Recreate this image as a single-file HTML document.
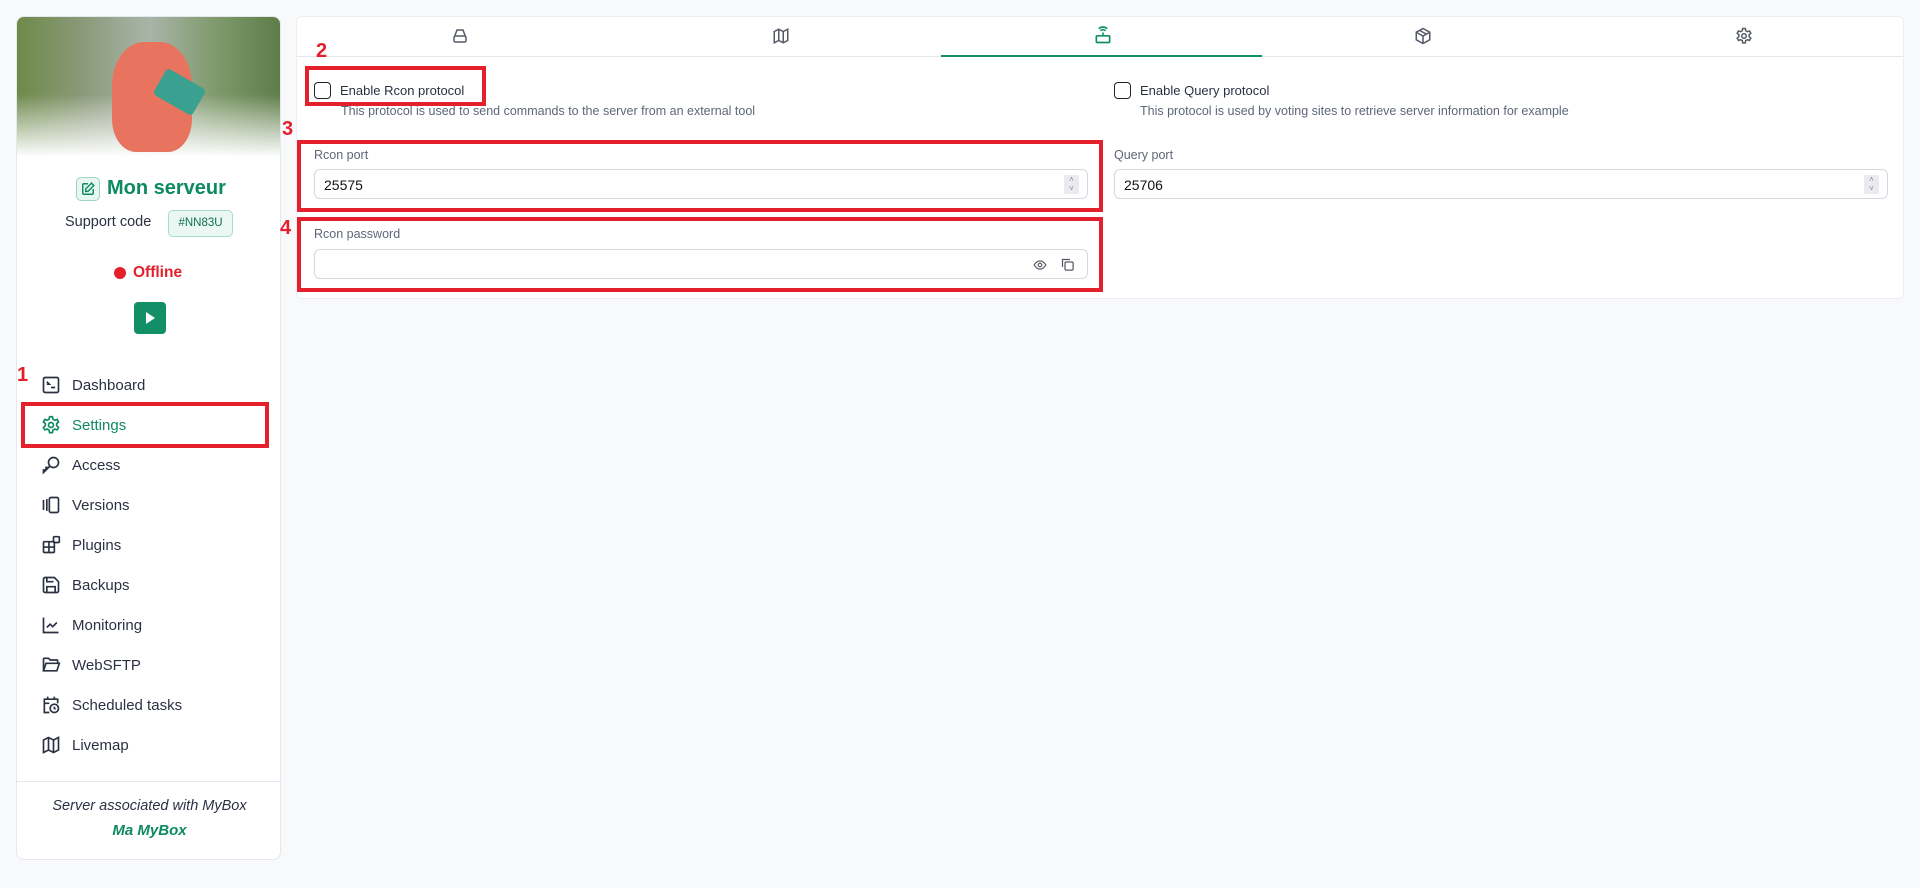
<!DOCTYPE html>
<html><head><meta charset="utf-8"><style>
*{box-sizing:border-box;margin:0;padding:0}
body{width:1920px;height:888px;background:#f8f9fb;font-family:"Liberation Sans",sans-serif;color:#2a3142;position:relative;overflow:hidden}
.a{position:absolute}
.card{left:16px;top:16px;width:265px;height:844px;background:#fff;border:1px solid #e4e7eb;border-radius:8px;overflow:hidden}
.hero{left:0;top:0;width:265px;height:140px;background:linear-gradient(180deg,rgba(255,255,255,0) 55%,#fff 100%),linear-gradient(90deg,#6d8a4a,#8b9a7a 25%,#a9b4a8 50%,#7f9a6c 75%,#5d7c48)}
.nav{left:24px;font-size:15px;color:#2a3142}
.nav svg{position:absolute;left:0;top:-2px}
.nav span{position:absolute;left:31px;top:0;white-space:nowrap}
.red{border:4px solid #e3202b}
.num{color:#e3202b;font-weight:bold;font-size:20px}
.panel{left:296px;top:16px;width:1608px;height:283px;background:#fff;border:1px solid #eceef1;border-radius:6px}
.lbl{font-size:13px;color:#2a3142}
.desc{font-size:12.5px;color:#5e6678}
.inp{height:30px;border:1px solid #d4d8de;border-radius:6px;background:#fff;font-size:14px;color:#111;padding:7px 9px}
.spin{position:absolute;right:8px;top:5px;width:15px;height:19px;background:#e9ebee;border-radius:2px;font-size:8px;color:#888;text-align:center;line-height:9px}
.cb{width:17px;height:17px;border:1.5px solid #222;border-radius:4px;background:#fff}
</style></head><body>

<div class="a card">
  <div class="a hero"></div>
  <div class="a" style="left:95px;top:25px;width:80px;height:110px;background:#e8735f;border-radius:40% 40% 30% 30%"></div>
  <div class="a" style="left:140px;top:60px;width:45px;height:30px;background:#3aa08f;transform:rotate(30deg);border-radius:4px"></div>
  <div class="a" style="left:59px;top:160px;width:24px;height:24px;border:1px solid #9fd6c1;background:#e7f6f0;border-radius:5px"></div>
  <svg class="a" style="left:64px;top:165px" width="14" height="14" viewBox="0 0 24 24" fill="none" stroke="#0e8a63" stroke-width="2.5"><path d="M12 3H5a2 2 0 0 0-2 2v14a2 2 0 0 0 2 2h14a2 2 0 0 0 2-2v-7"/><path d="M18 2l4 4-10 10H8v-4z"/></svg>
  <div class="a" style="left:90px;top:160px;font-size:20px;font-weight:bold;color:#0e8a63">Mon serveur</div>
  <div class="a" style="left:48px;top:197px;font-size:14.5px">Support code</div>
  <div class="a" style="left:151px;top:193px;width:65px;height:27px;border:1px solid #a6dcc8;background:#eaf7f2;border-radius:5px;font-size:11.5px;color:#0e6f52;text-align:center;line-height:25px">#NN83U</div>
  <div class="a" style="left:97px;top:250px;width:12px;height:12px;border-radius:50%;background:#e3202b"></div>
  <div class="a" style="left:116px;top:247px;font-size:15.5px;font-weight:bold;color:#e3202b">Offline</div>
  <div class="a" style="left:117px;top:285px;width:32px;height:32px;background:#138f68;border-radius:4px"></div>
  <div class="a" style="left:129px;top:295px;width:0;height:0;border-left:9px solid #fff;border-top:6px solid transparent;border-bottom:6px solid transparent"></div>

  <div class="a nav" style="top:360px"><svg width="20" height="20" viewBox="0 0 24 24" fill="none" stroke="#2a3142" stroke-width="2"><rect x="3" y="3" width="18" height="18" rx="2"/><path d="M7 8l3 3-3 0M12 15h5"/></svg><span>Dashboard</span></div>
  <div class="a nav" style="top:400px;color:#0e8a63"><svg width="20" height="20" viewBox="0 0 24 24" fill="none" stroke="#0e8a63" stroke-width="2"><circle cx="12" cy="12" r="3"/><path d="M10.3 2h3.4l.6 3 2.2 1.3 2.9-1 1.7 3-2.3 2v2.6l2.3 2-1.7 3-2.9-1-2.2 1.3-.6 3h-3.4l-.6-3-2.2-1.3-2.9 1-1.7-3 2.3-2v-2.6l-2.3-2 1.7-3 2.9 1 2.2-1.3z"/></svg><span>Settings</span></div>
  <div class="a nav" style="top:440px"><svg width="20" height="20" viewBox="0 0 24 24" fill="none" stroke="#2a3142" stroke-width="2"><circle cx="15" cy="9" r="6"/><path d="M10.5 13.5L3 21v-3h3v-3h3"/></svg><span>Access</span></div>
  <div class="a nav" style="top:480px"><svg width="20" height="20" viewBox="0 0 24 24" fill="none" stroke="#2a3142" stroke-width="2"><rect x="10" y="3" width="11" height="18" rx="2"/><path d="M3 6v12M7 5v14"/></svg><span>Versions</span></div>
  <div class="a nav" style="top:520px"><svg width="20" height="20" viewBox="0 0 24 24" fill="none" stroke="#2a3142" stroke-width="2"><rect x="3" y="8" width="13" height="13" rx="1"/><path d="M3 14.5h13M9.5 8v13"/><rect x="15" y="2" width="7" height="7" rx="1"/></svg><span>Plugins</span></div>
  <div class="a nav" style="top:560px"><svg width="20" height="20" viewBox="0 0 24 24" fill="none" stroke="#2a3142" stroke-width="2"><path d="M5 3h11l5 5v11a2 2 0 0 1-2 2H5a2 2 0 0 1-2-2V5a2 2 0 0 1 2-2z"/><path d="M7 3v5h8M7 21v-7h10v7"/></svg><span>Backups</span></div>
  <div class="a nav" style="top:600px"><svg width="20" height="20" viewBox="0 0 24 24" fill="none" stroke="#2a3142" stroke-width="2"><path d="M3 3v18h18"/><path d="M7 15l4-4 3 3 5-5"/></svg><span>Monitoring</span></div>
  <div class="a nav" style="top:640px"><svg width="20" height="20" viewBox="0 0 24 24" fill="none" stroke="#2a3142" stroke-width="2"><path d="M3 19V5a1 1 0 0 1 1-1h5l2 2h8a1 1 0 0 1 1 1v3"/><path d="M3 19l3-9h16l-3 9z"/></svg><span>WebSFTP</span></div>
  <div class="a nav" style="top:680px"><svg width="20" height="20" viewBox="0 0 24 24" fill="none" stroke="#2a3142" stroke-width="2"><path d="M10 21H4V5h16v5M4 10h6M8 2v4M16 2v4"/><circle cx="16" cy="16" r="5"/><path d="M16 14v2l1.5 1"/></svg><span>Scheduled tasks</span></div>
  <div class="a nav" style="top:720px"><svg width="20" height="20" viewBox="0 0 24 24" fill="none" stroke="#2a3142" stroke-width="2"><path d="M3 6l6-3 6 3 6-3v15l-6 3-6-3-6 3z"/><path d="M9 3v15M15 6v15"/></svg><span>Livemap</span></div>

  <div class="a" style="left:0;top:764px;width:265px;border-top:1px solid #e4e7eb"></div>
  <div class="a" style="left:0;top:781px;width:265px;text-align:center;font-size:14.5px;font-style:italic;color:#2a3142">Server associated with MyBox</div>
  <div class="a" style="left:0;top:805px;width:265px;text-align:center;font-size:15px;font-style:italic;font-weight:bold;color:#0e8a63">Ma MyBox</div>
</div>

<div class="a panel">
  <div class="a" style="left:0;top:39px;width:1606px;border-top:1px solid #e4e7eb"></div>
  <div class="a" style="left:644px;top:38px;width:321px;border-top:2px solid #138f68"></div>
  <svg class="a" style="left:154px;top:10px" width="18" height="18" viewBox="0 0 24 24" fill="none" stroke="#555b66" stroke-width="2"><path d="M5 12l3-8h8l3 8"/><rect x="4" y="12" width="16" height="8" rx="2"/><path d="M8 16h.01M11 16h.01"/></svg>
  <svg class="a" style="left:475px;top:10px" width="18" height="18" viewBox="0 0 24 24" fill="none" stroke="#555b66" stroke-width="2"><path d="M3 6l6-3 6 3 6-3v15l-6 3-6-3-6 3z"/><path d="M9 3v15M15 6v15"/></svg>
  <svg class="a" style="left:796px;top:8px" width="20" height="20" viewBox="0 0 24 24" fill="none" stroke="#138f68" stroke-width="2"><rect x="4" y="13" width="16" height="8" rx="1"/><path d="M12 13V9M9 7a4 4 0 0 1 6 0M7 4.5a7 7 0 0 1 10 0M8 17h.01M11 17h.01"/></svg>
  <svg class="a" style="left:1117px;top:10px" width="18" height="18" viewBox="0 0 24 24" fill="none" stroke="#555b66" stroke-width="2"><path d="M12 2l9 5v10l-9 5-9-5V7z"/><path d="M3 7l9 5 9-5M12 12v10M7.5 4.5l9 5"/></svg>
  <svg class="a" style="left:1438px;top:10px" width="18" height="18" viewBox="0 0 24 24" fill="none" stroke="#555b66" stroke-width="2"><circle cx="12" cy="12" r="3"/><path d="M10.3 2h3.4l.6 3 2.2 1.3 2.9-1 1.7 3-2.3 2v2.6l2.3 2-1.7 3-2.9-1-2.2 1.3-.6 3h-3.4l-.6-3-2.2-1.3-2.9 1-1.7-3 2.3-2v-2.6l-2.3-2 1.7-3 2.9 1 2.2-1.3z"/></svg>

  <div class="a cb" style="left:17px;top:65px"></div>
  <div class="a lbl" style="left:43px;top:66px">Enable Rcon protocol</div>
  <div class="a desc" style="left:44px;top:87px">This protocol is used to send commands to the server from an external tool</div>
  <div class="a cb" style="left:817px;top:65px"></div>
  <div class="a lbl" style="left:843px;top:66px">Enable Query protocol</div>
  <div class="a desc" style="left:843px;top:87px">This protocol is used by voting sites to retrieve server information for example</div>

  <div class="a desc" style="left:17px;top:131px">Rcon port</div>
  <div class="a inp" style="left:17px;top:152px;width:774px">25575<div class="spin">˄<br>˅</div></div>
  <div class="a desc" style="left:817px;top:131px">Query port</div>
  <div class="a inp" style="left:817px;top:152px;width:774px">25706<div class="spin">˄<br>˅</div></div>
  <div class="a desc" style="left:17px;top:210px">Rcon password</div>
  <div class="a inp" style="left:17px;top:232px;width:774px">
    <svg class="a" style="right:40px;top:8px" width="14" height="14" viewBox="0 0 24 24" fill="none" stroke="#555b66" stroke-width="2"><path d="M2 12s4-7 10-7 10 7 10 7-4 7-10 7S2 12 2 12z"/><circle cx="12" cy="12" r="3"/></svg>
    <svg class="a" style="right:12px;top:7px" width="15" height="15" viewBox="0 0 24 24" fill="none" stroke="#555b66" stroke-width="2"><rect x="8" y="8" width="13" height="13" rx="2"/><path d="M4 16V4h12"/></svg>
  </div>
</div>

<div class="a red" style="left:21px;top:402px;width:248px;height:46px"></div>
<div class="a red" style="left:305px;top:66px;width:181px;height:40px"></div>
<div class="a red" style="left:297px;top:140px;width:806px;height:72px"></div>
<div class="a red" style="left:297px;top:217px;width:806px;height:75px"></div>
<div class="a num" style="left:17px;top:364px">1</div>
<div class="a num" style="left:316px;top:40px">2</div>
<div class="a num" style="left:282px;top:118px">3</div>
<div class="a num" style="left:280px;top:217px">4</div>
</body></html>
